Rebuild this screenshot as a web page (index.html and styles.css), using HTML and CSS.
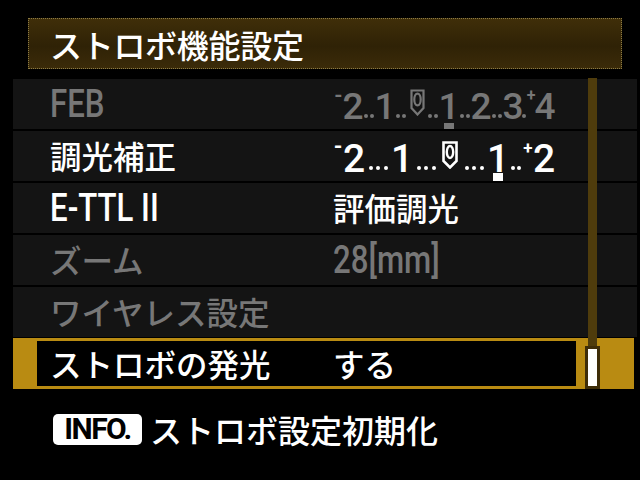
FILE: index.html
```html
<!DOCTYPE html>
<html lang="ja">
<head>
<meta charset="utf-8">
<title>ストロボ機能設定</title>
<link rel="stylesheet" href="styles.css">
</head>
<body>
<div class="screen">
  <div class="title">ストロボ機能設定</div>

  <div class="list">
    <div class="row dim">
      <div class="label"><span class="lat">FEB</span></div>
      <div class="scale small">
        <span class="sign">-</span>
        <span class="num">2</span><span class="dots"><i></i><i></i></span>
        <span class="num">1</span><span class="dots"><i></i><i></i></span>
        <span class="zero"><svg width="15" height="27" viewBox="0 0 15 27"><path d="M1.5 1.5 H13.5 V19 L7.5 25.5 L1.5 19 Z" fill="none" stroke="currentColor" stroke-width="2.2"/><ellipse cx="7.5" cy="10.5" rx="3.2" ry="5.8" fill="none" stroke="currentColor" stroke-width="2.2"/></svg></span><span class="dots"><i></i><i></i></span>
        <span class="num cur">1</span><span class="dots"><i></i><i></i></span>
        <span class="num">2</span><span class="dots"><i></i><i></i></span>
        <span class="num">3</span><span class="dots one"><i></i></span>
        <span class="sign plus">+</span>
        <span class="num">4</span>
      </div>
    </div>

    <div class="row">
      <div class="label">調光補正</div>
      <div class="scale">
        <span class="sign">-</span>
        <span class="num">2</span><span class="dots"><i></i><i></i><i></i></span>
        <span class="num">1</span><span class="dots"><i></i><i></i><i></i></span>
        <span class="zero"><svg width="16" height="28" viewBox="0 0 16 28"><path d="M1.5 1.5 H14.5 V20 L8 26.5 L1.5 20 Z" fill="none" stroke="currentColor" stroke-width="2.6"/><ellipse cx="8" cy="11" rx="3.2" ry="6" fill="none" stroke="currentColor" stroke-width="2.4"/></svg></span><span class="dots"><i></i><i></i><i></i></span>
        <span class="num cur">1</span><span class="dots two"><i></i><i></i></span>
        <span class="sign plus">+</span>
        <span class="num">2</span>
      </div>
    </div>

    <div class="row">
      <div class="label"><span class="lat">E-TTL II</span></div>
      <div class="value">評価調光</div>
    </div>

    <div class="row dim">
      <div class="label">ズーム</div>
      <div class="value"><span class="lat">28[mm]</span></div>
    </div>

    <div class="row dim">
      <div class="label">ワイヤレス設定</div>
    </div>

    <div class="row selected">
      <div class="box">
        <div class="label">ストロボの発光</div>
        <div class="value">する</div>
      </div>
    </div>

    <div class="track"></div>
    <div class="thumb"></div>
  </div>

  <div class="footer">
    <span class="badge"><span class="badge-text">INFO.</span></span>
    <span class="foot-text">ストロボ設定初期化</span>
  </div>
</div>
</body>
</html>
```

FILE: styles.css
```css
* { box-sizing: border-box; }
html, body { margin: 0; background: #000; }
body {
  width: 640px;
  height: 480px;
  overflow: hidden;
  font-family: "Noto Sans CJK JP", "Noto Sans", sans-serif;
  font-weight: 500;
  color: #fff;
}
.screen { padding-top: 18px; }

.title {
  margin-left: 28px;
  width: 594px;
  height: 51px;
  border: 1px dotted #8c7b44;
  background: linear-gradient(#3f2e09, #2f2206 55%, #3b2b09);
  display: flex;
  align-items: center;
  padding-left: 21px;
  font-size: 32px;
  line-height: 1;
  letter-spacing: -0.3px;
}

.list {
  position: relative;
  margin: 10px 0 0 13px;
  width: 624px;
  display: flex;
  flex-direction: column;
  gap: 2px;
}
.row {
  height: 50px;
  background: #141414;
  display: flex;
  align-items: center;
  padding-left: 37px;
}
.label {
  width: 283px;
  flex: none;
  font-size: 31.5px;
  line-height: 1;
  white-space: nowrap;
}
.value {
  font-size: 31.5px;
  line-height: 1;
  white-space: nowrap;
}
.dim { color: #777; }

.lat {
  display: inline-block;
  font-family: Roboto, "DejaVu Sans", sans-serif;
  font-weight: 500;
  font-size: 39px;
  line-height: 1;
  transform: scaleX(0.8);
  transform-origin: left center;
}

.selected {
  height: 51px;
  width: 621px;
  margin-top: -1px;
  background: #b98b12;
  padding: 3px 0 3px 24px;
}
.box {
  width: 539px;
  height: 45px;
  background: #000;
  display: flex;
  align-items: center;
  padding-left: 13px;
}

/* exposure scale */
.scale {
  display: flex;
  align-items: flex-end;
  height: 30px;
  font-family: Roboto, "DejaVu Sans", sans-serif;
  font-weight: 500;
  line-height: 1;
}
.scale .num {
  width: 22px;
  display: flex;
  justify-content: center;
  font-size: 39px;
  height: 30px;
  line-height: 36px;
  position: relative;
}
.scale .sign {
  align-self: flex-start;
  width: 10px;
  font-size: 22px;
  font-weight: 700;
  line-height: 12px;
  height: 12px;
  text-align: center;
}
.scale .sign.plus {
  width: 10px;
  font-size: 17px;
  line-height: 14px;
  height: 14px;
}
.scale .dots {
  width: 26px;
  height: 4px;
  margin-bottom: 1px;
  display: flex;
  justify-content: space-evenly;
}
.scale .dots i {
  width: 4px;
  height: 4px;
  border-radius: 50%;
  background: currentColor;
}
.scale .dots.two { width: 14px; }
.scale .zero {
  width: 22px;
  display: flex;
  justify-content: center;
  align-items: flex-end;
  height: 30px;
  padding-bottom: 2px;
}
.scale .cur::after {
  content: "";
  position: absolute;
  left: 6px;
  bottom: -10px;
  width: 10px;
  height: 8px;
  background: currentColor;
}

.scale.small .num { width: 18px; font-size: 37px; }
.scale.small .dots { width: 14px; }
.scale.small .dots.one { width: 4px; }
.scale.small .sign { width: 11px; font-size: 21px; }
.scale.small .sign.plus { width: 10px; font-size: 16px; }
.scale.small .zero { width: 18px; padding-bottom: 3px; }
.scale.small .cur::after { left: 4px; bottom: -10px; height: 6px; }

/* scrollbar overlay */
.track {
  position: absolute;
  left: 575px;
  top: -1px;
  width: 9px;
  height: 270px;
  background: #4f3c0c;
}
.thumb {
  position: absolute;
  left: 572px;
  top: 267px;
  width: 15px;
  height: 43px;
  background: #fff;
  border: 3px solid #3e2d08;
}

.footer {
  margin: 24px 0 0 53px;
  display: flex;
  align-items: center;
  gap: 8px;
}
.badge {
  width: 89px;
  height: 31px;
  background: #fff;
  border-radius: 5px;
  display: flex;
  align-items: center;
  justify-content: center;
}
.badge-text {
  color: #000;
  font-family: Roboto, "DejaVu Sans", sans-serif;
  font-weight: 700;
  font-size: 30px;
  line-height: 1;
  letter-spacing: -1.5px;
}
.foot-text {
  font-size: 32px;
  line-height: 1;
}
```
